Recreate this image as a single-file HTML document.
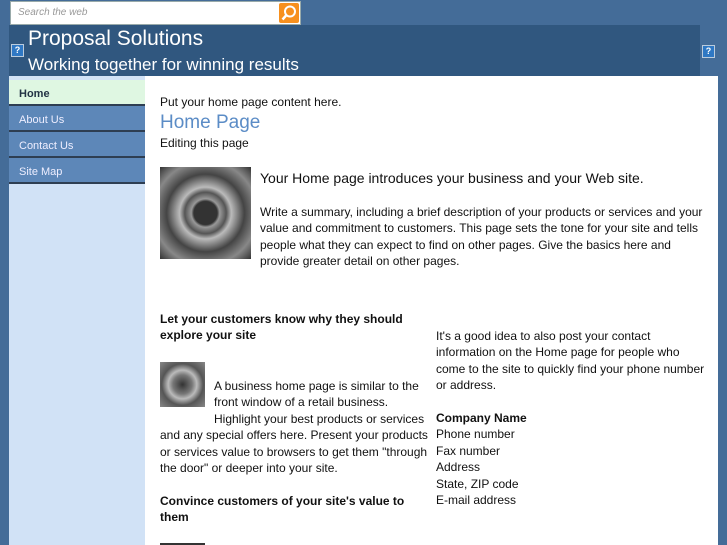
<!DOCTYPE html>
<html><head><meta charset="utf-8"><style>
*{margin:0;padding:0;box-sizing:border-box}
body{width:727px;height:545px;overflow:hidden;background:#446c98;font-family:"Liberation Sans",sans-serif;position:relative;color:#111}
.a{position:absolute}
.search{left:10px;top:1px;width:291px;height:24px;background:#fff;border:1px solid #9aa;}
.search span{position:absolute;left:7px;top:5px;font-size:10px;font-style:italic;color:#999}
.btn{position:absolute;right:1px;top:1px;width:20px;height:20px;background:#f7901e;border-radius:2px}
.hdr{left:9px;top:25px;width:691px;height:51px;background:#30577f}
.q{width:13px;height:13px;background:#2f78c4;border:1px solid #bcd;color:#fff;font-size:9px;font-weight:bold;text-align:center;line-height:11px}
.side{left:9px;top:76px;width:136px;height:469px;background:#d1e2f6}
.nav{position:absolute;left:0;width:136px;height:26px;font-size:11px;padding:8px 0 0 10px;color:#eef;background:#5d87b8;border-bottom:2px solid #2e3e52}
.main{left:145px;top:76px;width:573px;height:469px;background:#fff}
.t{font-size:12px;line-height:16.4px;color:#111}
b{font-weight:bold}
</style></head><body>
<div class="a search"><span>Search the web</span><div class="btn"><svg width="20" height="20"><circle cx="11" cy="8.5" r="5" fill="none" stroke="#fff" stroke-width="2"/><line x1="7.5" y1="12" x2="3.5" y2="16.5" stroke="#fff" stroke-width="2.5"/></svg></div></div>
<div class="a hdr"></div>
<div class="a q" style="left:11px;top:44px">?</div>
<div class="a q" style="left:702px;top:45px">?</div>
<div class="a" style="left:28px;top:27px;font-size:21px;color:#fff">Proposal Solutions</div>
<div class="a" style="left:28px;top:55px;font-size:17px;color:#fff">Working together for winning results</div>
<div class="a side">
<div class="nav" style="top:4px;background:#dff7e2;color:#234;font-weight:bold">Home</div>
<div class="nav" style="top:30px">About Us</div>
<div class="nav" style="top:56px">Contact Us</div>
<div class="nav" style="top:82px">Site Map</div>
</div>
<div class="a main"></div>
<div class="a t" style="left:160px;top:94px">Put your home page content here.</div>
<div class="a" style="left:160px;top:112px;font-size:19px;color:#5b8cc6">Home Page</div>
<div class="a t" style="left:160px;top:135px">Editing this page</div>
<div class="a" style="left:160px;top:167px;width:91px;height:92px;background:radial-gradient(circle at 50% 50%,#333 0,#333 18%,#999 22%,#555 32%,#bbb 40%,#444 60%,#888 80%,#333 100%)"></div>
<div class="a" style="left:260px;top:170px;font-size:14px;color:#111">Your Home page introduces your business and your Web site.</div>
<div class="a t" style="left:260px;top:204px;width:450px">Write a summary, including a brief description of your products or services and your value and commitment to customers. This page sets the tone for your site and tells people what they can expect to find on other pages. Give the basics here and provide greater detail on other pages.</div>
<div class="a t" style="left:160px;top:311px;width:260px"><b>Let your customers know why they should explore your site</b></div>
<div class="a" style="left:160px;top:362px;width:45px;height:45px;background:radial-gradient(circle,#333 0,#777 30%,#bbb 45%,#555 65%,#888 100%)"></div>
<div class="a t" style="left:160px;top:378px;width:270px"><div style="float:left;width:54px;height:48px"></div>A business home page is similar to the front window of a retail business. Highlight your best products or services and any special offers here. Present your products or services value to browsers to get them "through the door" or deeper into your site.</div>
<div class="a t" style="left:160px;top:493px;width:260px"><b>Convince customers of your site's value to them</b></div>
<div class="a" style="left:160px;top:543px;width:45px;height:2px;background:#333"></div>
<div class="a t" style="left:436px;top:328px;width:275px">It's a good idea to also post your contact information on the Home page for people who come to the site to quickly find your phone number or address.<br><br><b>Company Name</b><br>Phone number<br>Fax number<br>Address<br>State, ZIP code<br>E-mail address</div>
</body></html>
